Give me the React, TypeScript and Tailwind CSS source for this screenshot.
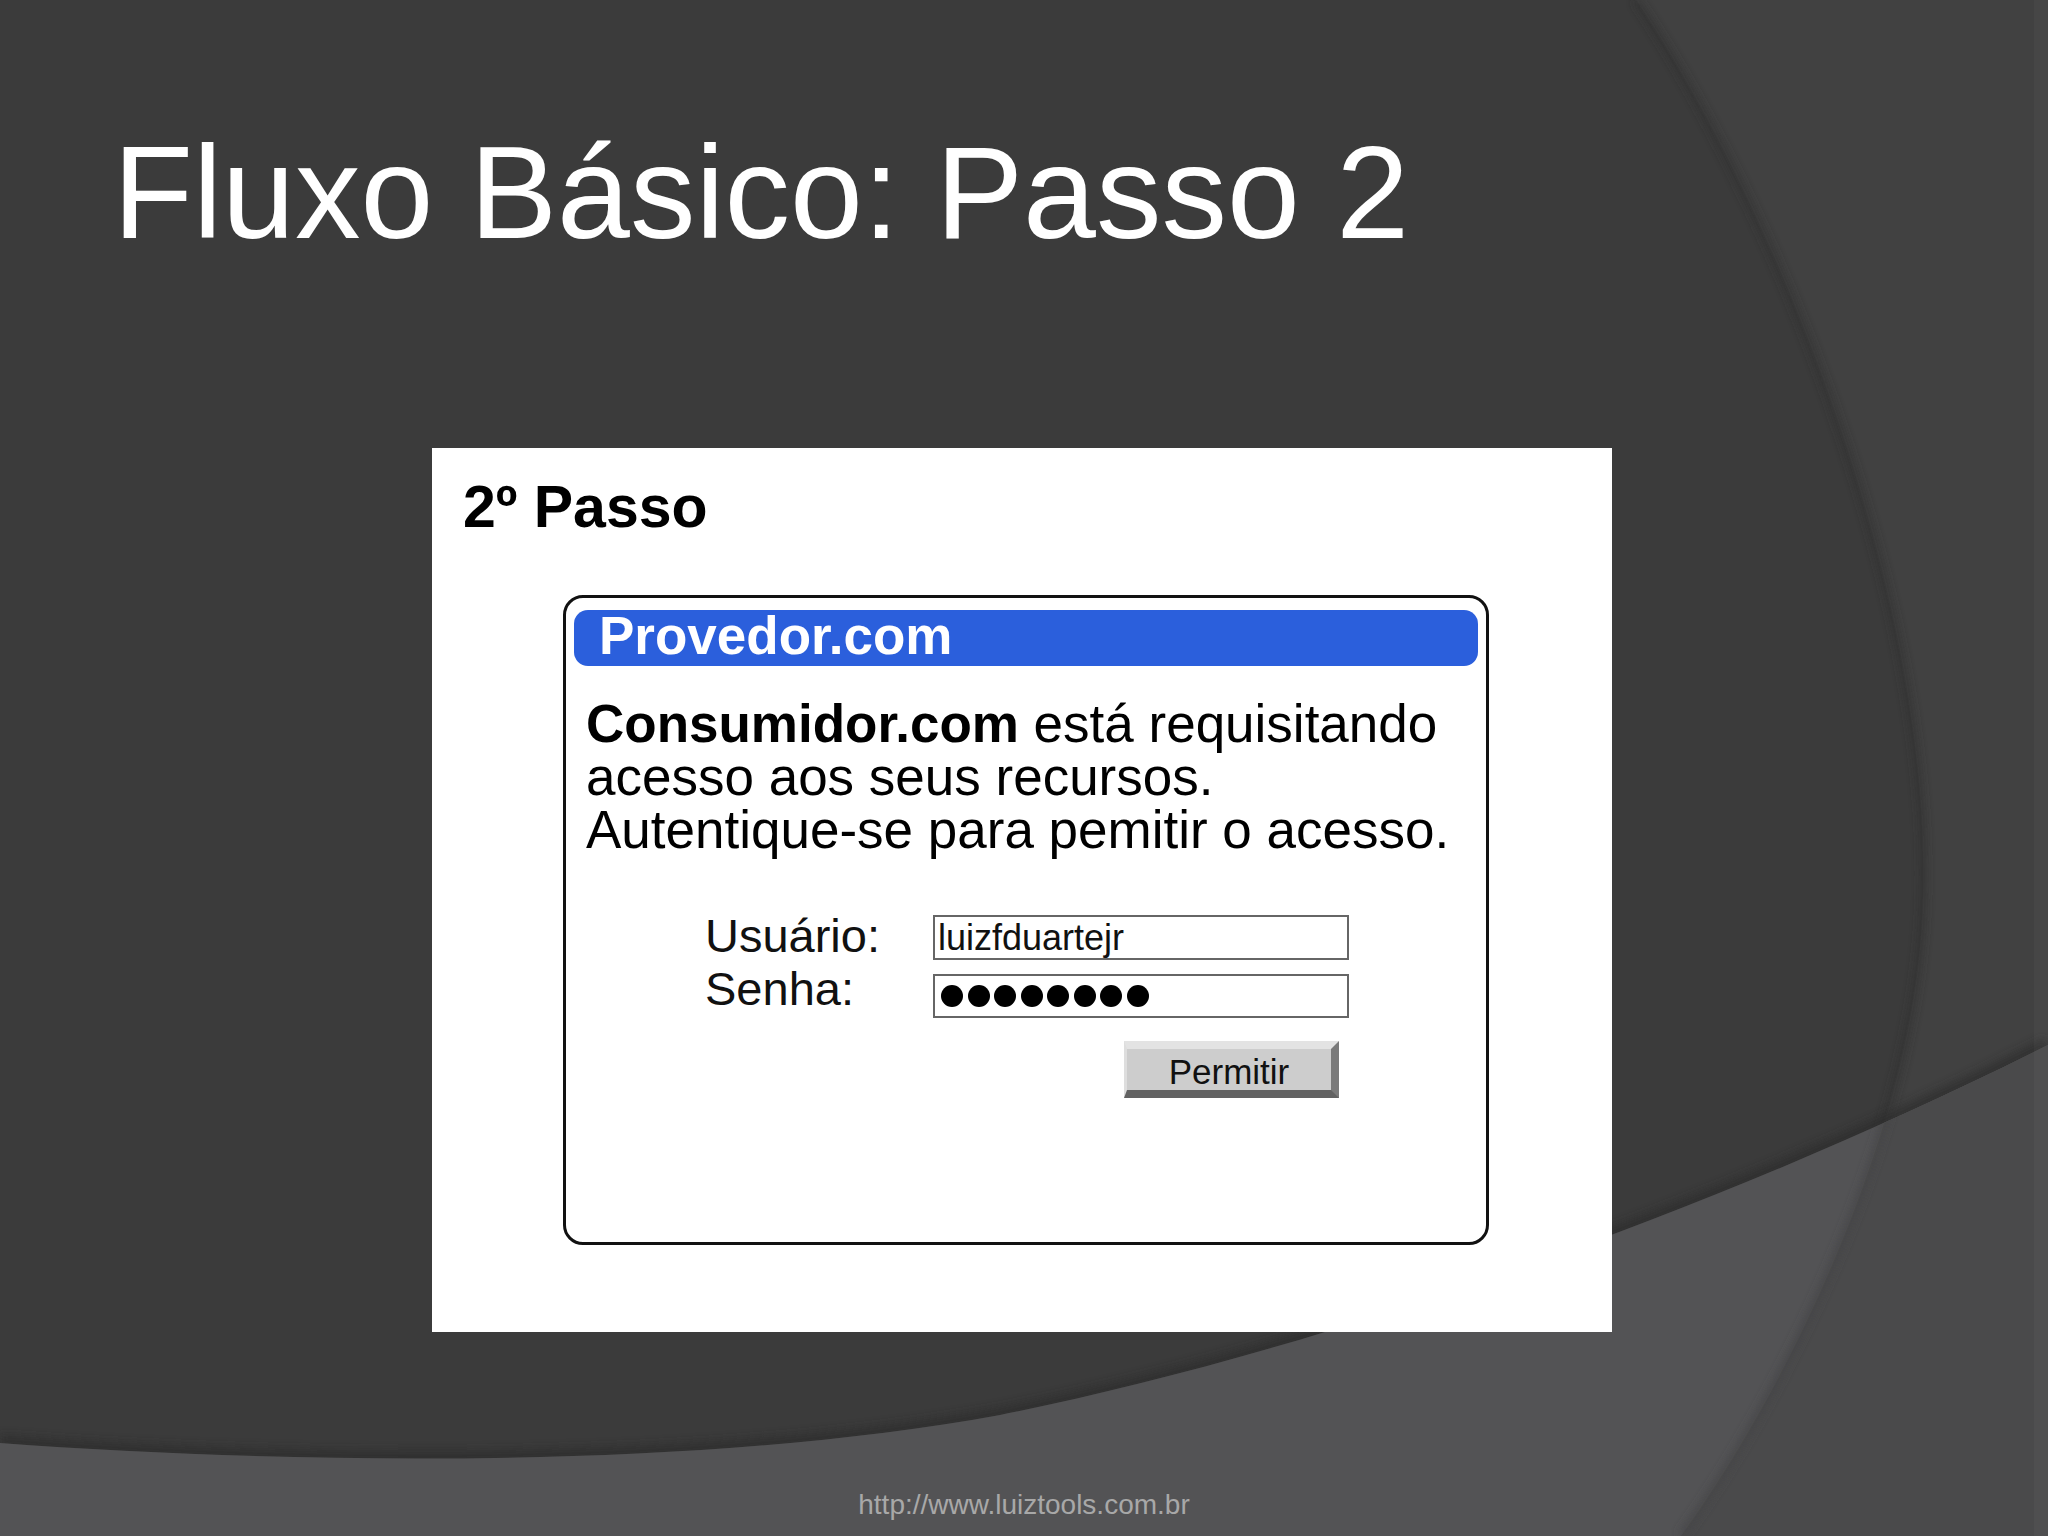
import React from 'react';

// Slide background: dark base with two sweeping curves
const SlideBackground: React.FC = () => {
  const arc = 'M1636 0 C1790 230 1950 650 1920 950 C1899 1160 1780 1400 1681 1536';
  const bottom = 'M0 1443 C300 1465 700 1470 1000 1415 C1300 1355 1700 1220 2048 1045';

  return (
    <svg
      className="absolute inset-0 w-full h-full"
      viewBox="0 0 2048 1536"
      preserveAspectRatio="none"
    >
      <defs>
        <clipPath id="bottomClip">
          <path d={`${bottom} L2048 1536 L0 1536 Z`} />
        </clipPath>
        <clipPath id="aboveClip">
          <path d={`${bottom} L2048 0 L0 0 Z`} />
        </clipPath>
        <filter id="soft" x="-10%" y="-10%" width="120%" height="120%">
          <feGaussianBlur stdDeviation="4" />
        </filter>
      </defs>
      <rect x="0" y="0" width="2048" height="1536" fill="#3b3b3b" />
      <path d={`${arc} L2048 1536 L2048 0 Z`} fill="#414141" />
      <path d={`${arc}`} fill="none" stroke="#2e2e2e" strokeWidth="6" opacity="0.7" filter="url(#soft)" />
      <g clipPath="url(#aboveClip)">
        <path d={bottom} fill="none" stroke="#2a2a2a" strokeWidth="16" opacity="0.6" filter="url(#soft)" />
      </g>
      <path d={`${bottom} L2048 1536 L0 1536 Z`} fill="#535355" />
      <g clipPath="url(#bottomClip)">
        <path d={`${arc} L2048 1536 L2048 0 Z`} fill="#4a4a4b" />
        <path d={arc} fill="none" stroke="#444446" strokeWidth="6" filter="url(#soft)" />
      </g>
      <rect x="2034" y="0" width="14" height="1536" fill="#ffffff" opacity="0.03" />
    </svg>
  );
};

const PasswordDots: React.FC<{ count: number }> = ({ count }) => (
  <>
    {Array.from({ length: count }).map((_, i) => (
      <span key={i} className="block w-[22px] h-[22px] rounded-full bg-black" />
    ))}
  </>
);

export default function App() {
  return (
    <div className="relative w-[2048px] h-[1536px] overflow-hidden bg-[#3b3b3b] font-['Liberation_Sans',Arial,sans-serif]">
      <SlideBackground />

      <div className="relative flex flex-col h-full">
        {/* Slide title */}
        <h1 className="ml-[113px] mt-[127px] text-[131px] leading-none font-normal text-white whitespace-nowrap">
          Fluxo Básico: Passo 2
        </h1>

        {/* Screenshot panel */}
        <div className="ml-[432px] mt-[190px] w-[1180px] h-[884px] bg-white flex flex-col">
          <h2 className="ml-[31px] mt-[30px] text-[59px] leading-none font-bold text-black whitespace-nowrap">
            2º Passo
          </h2>

          <div className="ml-[131px] mt-[58px] w-[926px] h-[650px] border-[3px] border-[#111] rounded-[20px] px-[8px] pt-[12px] flex flex-col">
            <div className="h-[56px] rounded-[14px] bg-[#2b5fdc] pl-[25px]">
              <span className="block text-[53px] leading-[52px] font-bold text-white whitespace-nowrap">Provedor.com</span>
            </div>

            <div className="ml-[12px] mt-[31px] text-[53px] leading-[53px] text-black whitespace-nowrap">
              <p>
                <span className="font-bold">Consumidor.com</span> está requisitando
              </p>
              <p>acesso aos seus recursos.</p>
              <p>Autentique-se para pemitir o acesso.</p>
            </div>

            <div className="ml-[131px] mt-[53px] flex">
              <div className="w-[228px] text-[47px] leading-[53px] text-[#111]">
                <div>Usuário:</div>
                <div>Senha:</div>
              </div>
              <div className="w-[416px] pt-[6px] flex flex-col">
                <div className="h-[45px] border-2 border-[#666] pl-[3px] text-[36px] leading-[41px] text-[#111]">
                  luizfduartejr
                </div>
                <div className="mt-[14px] h-[44px] border-2 border-[#666] pl-[6px] flex items-center gap-[4.5px]">
                  <PasswordDots count={8} />
                </div>
                <button
                  type="button"
                  className="self-end mr-[10px] mt-[23px] w-[215px] h-[57px] box-border border-t-[8px] border-l-[3px] border-r-[8px] border-b-[8px] border-t-[#e3e3e3] border-l-[#dedede] border-r-[#7a7a7a] border-b-[#626262] bg-[#cdcdcd] flex items-center justify-center pt-[3px] text-[35px] leading-none text-[#111]"
                >
                  Permitir
                </button>
              </div>
            </div>
          </div>
        </div>

        {/* Footer */}
        <p className="mt-[159px] text-center text-[28px] leading-none text-[#a8a8a8]">
          http://www.luiztools.com.br
        </p>
      </div>
    </div>
  );
}
